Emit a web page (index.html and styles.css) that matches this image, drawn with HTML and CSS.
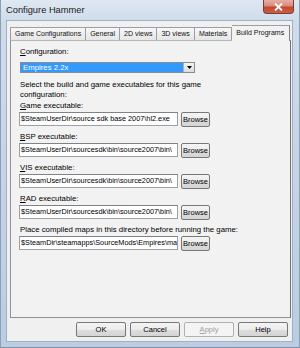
FILE: index.html
```html
<!DOCTYPE html>
<html>
<head>
<meta charset="utf-8">
<title>Configure Hammer</title>
<link rel="stylesheet" href="styles.css">
</head>
<body>
<div class="window">
  <div class="titlebar">
    <span class="title">Configure Hammer</span>
    <span class="close">
      <svg width="9" height="8" viewBox="0 0 9 8"><path d="M1 0.5 L8 7.5 M8 0.5 L1 7.5" stroke="#ffffff" stroke-width="1.8" fill="none"/></svg>
    </span>
  </div>
  <div class="client">
    <div class="tabs">
      <div class="tab">Game Configurations</div>
      <div class="tab">General</div>
      <div class="tab">2D views</div>
      <div class="tab">3D views</div>
      <div class="tab">Materials</div>
      <div class="tab selected">Build Programs</div>
    </div>
    <div class="panel">
      <div class="label"><u>C</u>onfiguration:</div>
      <div class="combo">
        <span class="combo-value">Empires 2.2x</span>
        <span class="combo-btn"><svg width="5" height="3" viewBox="0 0 5 3"><path d="M0 0 H5 L2.5 3 Z" fill="#000"/></svg></span>
      </div>
      <p class="desc">Select the build and game executables for this game<br>configuration:</p>
      <div class="field">
        <div class="label"><u>G</u>ame executable:</div>
        <div class="row"><div class="input">$SteamUserDir\source sdk base 2007\hl2.exe</div><button class="btn">Browse</button></div>
      </div>
      <div class="field">
        <div class="label"><u>B</u>SP executable:</div>
        <div class="row"><div class="input">$SteamUserDir\sourcesdk\bin\source2007\bin\</div><button class="btn">Browse</button></div>
      </div>
      <div class="field">
        <div class="label"><u>V</u>IS executable:</div>
        <div class="row"><div class="input">$SteamUserDir\sourcesdk\bin\source2007\bin\</div><button class="btn">Browse</button></div>
      </div>
      <div class="field">
        <div class="label"><u>R</u>AD executable:</div>
        <div class="row"><div class="input">$SteamUserDir\sourcesdk\bin\source2007\bin\</div><button class="btn">Browse</button></div>
      </div>
      <div class="field last">
        <div class="label">Place compiled maps in this directory before running the game:</div>
        <div class="row"><div class="input">$SteamDir\steamapps\SourceMods\Empires\ma</div><button class="btn">Browse</button></div>
      </div>
    </div>
    <div class="buttons">
      <button class="btn dlg">OK</button>
      <button class="btn dlg">Cancel</button>
      <button class="btn dlg disabled"><u>A</u>pply</button>
      <button class="btn dlg">Help</button>
    </div>
  </div>
</div>
</body>
</html>
```

FILE: styles.css
```css
* { box-sizing: border-box; }
html, body {
  margin: 0;
  padding: 0;
  width: 300px;
  height: 348px;
  overflow: hidden;
  background: #c8d6e6;
}
.window {
  width: 300px;
  height: 348px;
  background: linear-gradient(to bottom, #dfe8f2 0px, #cfdcea 20px, #c3d3e5 200px, #bccde1 348px);
  border-left: 1px solid #8d9fb5;
  border-right: 1px solid #8d9fb5;
  border-bottom: 1px solid #7f92aa;
  font-family: "Liberation Sans", Arial, sans-serif;
  font-size: 7px;
  color: #000;
  display: flex;
  flex-direction: column;
}
.titlebar {
  height: 20px;
  display: flex;
  align-items: flex-start;
}
.title {
  font-size: 9.3px;
  margin: 5px 0 0 5px;
  color: #1a1a1a;
}
.close {
  margin-left: auto;
  margin-right: 5px;
  width: 31px;
  height: 14px;
  border: 1px solid #7d3a30;
  border-top: none;
  border-radius: 0 0 4px 4px;
  background: linear-gradient(to bottom, #e6b0a4 0%, #d88a78 45%, #c5472f 55%, #c9604a 100%);
  display: flex;
  align-items: center;
  justify-content: center;
}
.client {
  margin: 0 6px 0 5px;
  height: 322px;
  background: #f0f0f0;
  border: 1px solid #9eb0c5;
  padding: 4px 1px 4px 3px;
  display: flex;
  flex-direction: column;
}
.tabs {
  display: flex;
  height: 15px;
  align-items: flex-end;
  position: relative;
  z-index: 1;
}
.tab {
  height: 13px;
  padding: 0 4px;
  line-height: 12px;
  border: 1px solid #9a9ea6;
  border-bottom: none;
  border-right: none;
  background: linear-gradient(to bottom, #f7f7f7, #e6e6e6);
  white-space: nowrap;
  color: #111;
}
.tab:nth-child(5) { border-right: 1px solid #9a9ea6; }
.tab.selected {
  line-height: 14px;
  background: #f2f2f2;
  border-right: 1px solid #7d8088;
  border-left: none;
  padding: 0 5px 0 4px;
  margin-bottom: -1px;
  height: 16px;
}
.panel {
  height: 278px;
  border: 1px solid #8e9297;
  border-right: 1px solid #6f7378;
  border-top-color: #b4b7bb;
  background: #f2f2f2;
  padding: 6px 0 0 9px;
  font-size: 7.8px;
}
.label {
  line-height: 10px;
  height: 10px;
  white-space: nowrap;
}
u { text-decoration: underline; text-underline-offset: 1px; }
.combo {
  margin-top: 5px;
  width: 175px;
  height: 11px;
  border: 1px solid #8b8b8b;
  background: #fff;
  display: flex;
}
.combo-value {
  flex: 1;
  background: #3399ff;
  color: #fff;
  line-height: 9px;
  padding-left: 2px;
}
.combo-btn {
  width: 11px;
  border-left: 1px solid #b0b0b0;
  background: linear-gradient(to bottom, #f4f4f4, #dcdcdc);
  display: flex;
  align-items: center;
  justify-content: center;
}
.desc {
  margin: 7px 0 1px 0;
  line-height: 10px;
}
.field {
  margin-bottom: 5px;
}
.field.last { margin-top: 1px; }
.row {
  margin-top: 1px;
  display: flex;
  gap: 3px;
  height: 15px;
  margin-left: -1px;
}
.input {
  width: 159px;
  flex: none;
  height: 14px;
  border: 1px solid #9ea0a6;
  border-top-color: #7f8288;
  background: #fff;
  font-size: 7.3px;
  line-height: 12px;
  padding-left: 1px;
  white-space: nowrap;
  overflow: hidden;
}
.btn {
  font-family: "Liberation Sans", Arial, sans-serif;
  font-size: 7.5px;
  color: #000;
  width: 29px;
  flex: none;
  height: 15px;
  padding: 0;
  border: 1px solid #777;
  border-radius: 2px;
  background: linear-gradient(to bottom, #f4f4f4 0%, #ececec 50%, #dedede 51%, #d4d4d4 100%);
  line-height: 13px;
  text-align: center;
}
.buttons {
  margin-top: 4px;
  margin-right: 3px;
  display: flex;
  justify-content: flex-end;
  gap: 4px;
}
.btn.dlg {
  width: 50px;
}
.btn.disabled {
  color: #a0a0a0;
  border-color: #adb2b5;
  background: #f4f4f4;
}
```
